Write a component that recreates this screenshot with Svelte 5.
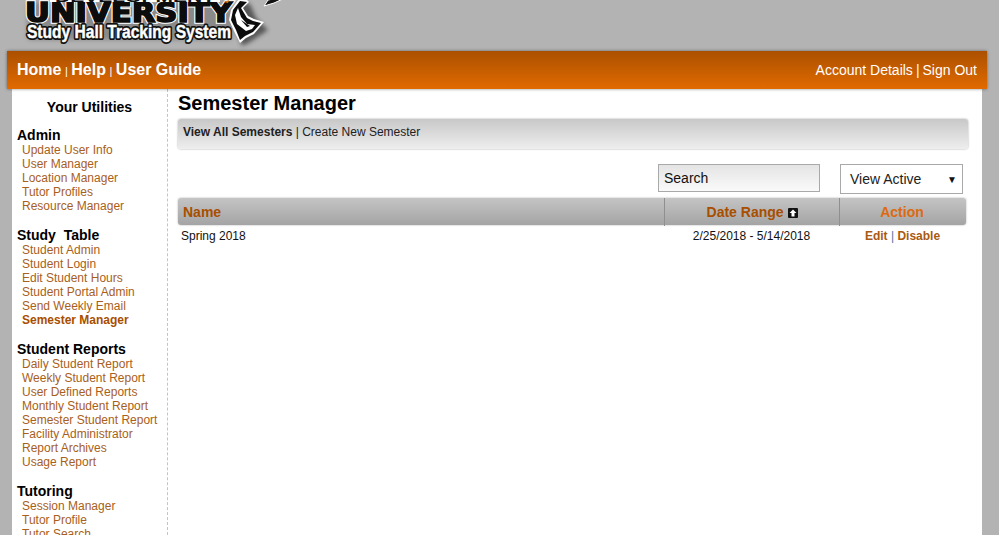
<script>
  const groups = [
    { title: 'Admin', items: ['Update User Info', 'User Manager', 'Location Manager', 'Tutor Profiles', 'Resource Manager'] },
    { title: 'Study  Table', items: ['Student Admin', 'Student Login', 'Edit Student Hours', 'Student Portal Admin', 'Send Weekly Email', 'Semester Manager'] },
    { title: 'Student Reports', items: ['Daily Student Report', 'Weekly Student Report', 'User Defined Reports', 'Monthly Student Report', 'Semester Student Report', 'Facility Administrator', 'Report Archives', 'Usage Report'] },
    { title: 'Tutoring', items: ['Session Manager', 'Tutor Profile', 'Tutor Search'] }
  ]
</script>

<div class="page">
  <header class="logo">
    <svg width="300" height="51" viewBox="0 0 300 51">
      <defs>
        <filter id="soft" x="-20%" y="-20%" width="140%" height="150%">
          <feGaussianBlur stdDeviation="2" />
        </filter>
      </defs>
      <!-- grey glow behind the lettering -->
      <rect x="27" y="2" width="205" height="38" rx="4" fill="#6a6a6a" opacity=".55" filter="url(#soft)" />
      <path d="M240 2 L233 20 L242 46 L250 42 L268 30 L256 18 L250 4 Z" fill="#333" opacity=".7" filter="url(#soft)" />
      <text class="uni back" x="25" y="22" textLength="207" lengthAdjust="spacingAndGlyphs">UNIVERSITY</text>
      <text class="uni" x="25" y="22" textLength="207" lengthAdjust="spacingAndGlyphs">UNIVERSITY</text>
      <rect x="50" y="0" width="170" height="2" fill="#fff" />
      <text class="top" x="55" y="2" textLength="160" lengthAdjust="spacingAndGlyphs">DEVELOPMENT</text>
      <path d="M224 2 L229 0 L228 3 Z" fill="#e07a10" />
      <!-- mascot head -->
      <path d="M238 0 L231 10 L229 20 L234 31 L240 43 L246 38 L254 34 L264 22 L254 19 L248 16 L243 8 L249 2 L247 0 Z" fill="#fff" />
      <path d="M240 1 L233 10 L231 20 L236 30 L240 40 L245 36 L253 32 L261 23 L253 21 L247 18 L241 8 L247 2 Z" fill="#0c0c0c" />
      <path d="M238 8 L235 15 L237 24 L246 31 L252 29 L255 25 L247 24 L241 17 Z" fill="#fff" />
      <path d="M241 20 L247 27 L250 26 L244 22 Z" fill="#0c0c0c" />
      <path d="M264 6 L274 3 L285 -2 L279 -2 L268 0 Z" fill="#111" stroke="#fff" />
      <text class="sub back" x="27" y="38" textLength="204" lengthAdjust="spacingAndGlyphs">Study Hall Tracking System</text>
      <text class="sub" x="27" y="38" textLength="204" lengthAdjust="spacingAndGlyphs">Study Hall Tracking System</text>
    </svg>
  </header>

  <nav class="topbar">
    <div class="mainlinks">
      <a href="#home">Home</a><span class="sep">|</span><a href="#help">Help</a><span class="sep">|</span><a href="#guide">User Guide</a>
    </div>
    <div class="acct">
      <a href="#account">Account Details</a><span class="sep">|</span><a href="#out">Sign Out</a>
    </div>
  </nav>

  <div class="sheet">
    <aside class="side">
      <h3>Your Utilities</h3>
      {#each groups as g}
        <section class="group">
          <h4>{g.title}</h4>
          {#each g.items as item}
            <a href="#item" class:current={item === 'Semester Manager'}>{item}</a>
          {/each}
        </section>
      {/each}
    </aside>

    <main class="content">
      <h1>Semester Manager</h1>
      <div class="subnav"><b>View All Semesters</b> | Create New Semester</div>

      <div class="filters">
        <input class="search" type="text" value="Search" />
        <div class="select"><span>View Active</span><i>▼</i></div>
      </div>

      <div class="thead">
        <div class="c-name">Name</div>
        <div class="c-date">Date Range
          <svg class="sort" width="10" height="10" viewBox="0 0 10 10"><rect width="10" height="10" rx="1" fill="#111" /><path d="M5 1.5 L8.5 5 H6.5 V8.5 H3.5 V5 H1.5 Z" fill="#fff" /></svg>
        </div>
        <div class="c-act">Action</div>
      </div>
      <div class="trow">
        <div class="c-name">Spring 2018</div>
        <div class="c-date">2/25/2018 - 5/14/2018</div>
        <div class="c-act"><a href="#edit">Edit</a> <span>|</span> <a href="#disable">Disable</a></div>
      </div>
    </main>
  </div>
</div>

<style>
  :global(body) {
    margin: 0;
    background: #b3b3b3;
    font-family: "Liberation Sans", Arial, sans-serif;
    overflow: hidden;
  }
  .page {
    height: 535px;
    overflow: hidden;
    display: flex;
    flex-direction: column;
  }
  a {
    text-decoration: none;
  }
  .logo {
    height: 51px;
    flex: none;
  }
  .logo svg {
    display: block;
  }
  .logo text {
    font-weight: bold;
  }
  .top {
    font-family: "Liberation Sans", Arial, sans-serif;
    font-size: 13px;
    fill: #111;
  }
  .uni {
    font-family: "DejaVu Sans", sans-serif;
    font-size: 26px;
    fill: #0c0c0c;
    stroke: #0c0c0c;
    stroke-width: 1.6px;
  }
  .uni.back {
    stroke: #fff;
    stroke-width: 3.5px;
  }
  .sub {
    font-family: "Liberation Sans", Arial, sans-serif;
    font-size: 18px;
    fill: #fff;
    stroke: #fff;
    stroke-width: .4px;
  }
  .sub.back {
    stroke: #111;
    stroke-width: 4px;
    stroke-linejoin: round;
  }
  .topbar {
    flex: none;
    height: 38px;
    margin: 0 12px 0 7px;
    padding: 0 10px;
    box-sizing: border-box;
    display: flex;
    justify-content: space-between;
    align-items: center;
    background: linear-gradient(#ab5000, #e16a00);
    box-shadow: 0 0 3px rgba(0, 0, 0, .45);
    color: #fff;
    position: relative;
  }
  .topbar a {
    color: #fff;
  }
  .mainlinks {
    font-size: 16px;
    font-weight: bold;
  }
  .mainlinks .sep {
    font-size: 11px;
    font-weight: normal;
    margin: 0 3.5px;
  }
  .acct {
    font-size: 14px;
  }
  .acct .sep {
    margin: 0 3px;
    font-size: 14px;
  }
  .sheet {
    flex: 1;
    margin: 0 17px 0 12px;
    background: #fff;
    display: flex;
    min-height: 0;
  }
  .side {
    width: 145px;
    flex: none;
    border-right: 1px dashed #c4c4c4;
    padding: 10px 5px 0;
    overflow: hidden;
  }
  .side h3 {
    margin: 0 0 13px;
    font-size: 14px;
    line-height: 16px;
    font-weight: bold;
    text-align: center;
    color: #000;
  }
  .group {
    margin-bottom: 15px;
  }
  .group h4 {
    margin: 0;
    font-size: 14px;
    line-height: 15px;
    font-weight: bold;
    color: #000;
    white-space: pre;
  }
  .group a {
    display: block;
    margin-left: 5px;
    font-size: 12px;
    line-height: 14px;
    color: #a8601a;
    white-space: nowrap;
  }
  .group a.current {
    font-weight: bold;
    color: #a84e00;
  }
  .content {
    flex: 1;
    padding: 3px 14px 0 10px;
    min-width: 0;
  }
  h1 {
    margin: 0;
    font-size: 20px;
    line-height: 22px;
    font-weight: bold;
    color: #000;
  }
  .subnav {
    margin-top: 5px;
    height: 30px;
    box-sizing: border-box;
    padding: 6px 5px 0;
    font-size: 12px;
    line-height: 14px;
    color: #222;
    background: linear-gradient(#c8c8c8, #eeeeee);
    border-radius: 3px;
    box-shadow: 0 0 2px rgba(0, 0, 0, .4);
  }
  .filters {
    display: flex;
    justify-content: flex-end;
    gap: 20px;
    margin-top: 15px;
    padding-right: 5px;
  }
  .search {
    width: 162px;
    height: 28px;
    box-sizing: border-box;
    padding: 0 5px;
    border: 1px solid #a9a9a9;
    background: linear-gradient(#e4e4e4, #fafafa);
    font: 14px "Liberation Sans", Arial, sans-serif;
    color: #111;
    outline: none;
    border-radius: 0;
  }
  .select {
    width: 123px;
    height: 30px;
    box-sizing: border-box;
    border: 1px solid #a9a9a9;
    background: #fff;
    display: flex;
    justify-content: space-between;
    align-items: center;
    padding: 0 5px 0 9px;
    font-size: 14px;
    color: #222;
  }
  .select i {
    font-style: normal;
    font-size: 10px;
    color: #111;
  }
  .thead,
  .trow {
    display: grid;
    grid-template-columns: 486px 175px 127px;
    margin-right: 2px;
  }
  .thead {
    margin-top: 4px;
    height: 27px;
    align-items: center;
    font-size: 14px;
    font-weight: bold;
    color: #a84e00;
    background: linear-gradient(#c4c4c4, #a4a4a4);
    border-radius: 3px;
    box-shadow: 0 0 2px rgba(0, 0, 0, .35);
  }
  .thead > div {
    height: 100%;
    line-height: 28px;
  }
  .thead .c-name {
    padding-left: 5px;
  }
  .thead .c-date {
    border-left: 1px solid #8f8f8f;
    padding-left: 1px;
  }
  .thead .c-act {
    border-left: 1px solid #8f8f8f;
    padding-right: 2px;
    color: #dd6a10;
  }
  .c-date,
  .c-act {
    text-align: center;
  }
  .sort {
    vertical-align: -1px;
    margin-left: 1px;
  }
  .trow {
    font-size: 12px;
    line-height: 14px;
    padding-top: 4px;
    color: #111;
  }
  .trow .c-name {
    padding-left: 3px;
  }
  .trow .c-act a {
    color: #a85a14;
    font-weight: bold;
  }
  .trow .c-act span {
    color: #55789a;
  }
</style>
